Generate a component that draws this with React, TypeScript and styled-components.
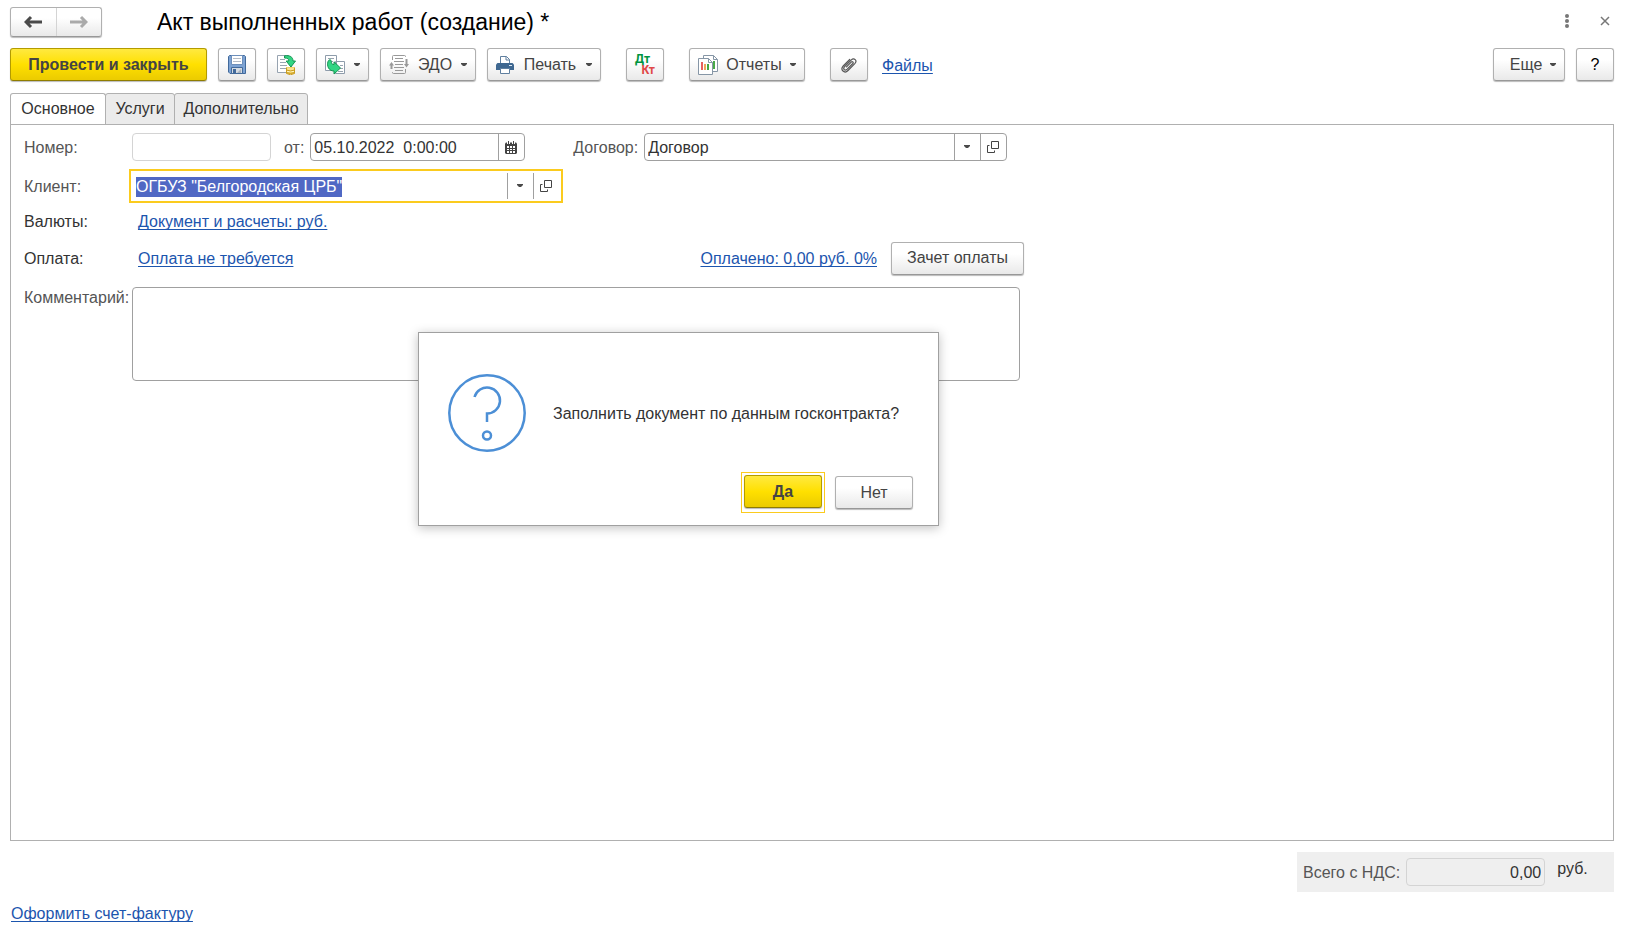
import React, { useEffect, useRef } from 'react';
import styled, { createGlobalStyle, css } from 'styled-components';

const GlobalStyle = createGlobalStyle`
  *, *::before, *::after { box-sizing: border-box; }
  body {
    margin: 0;
    background: #fff;
    color: #333;
    font: 16px/20px "Liberation Sans", Arial, sans-serif;
  }
  button, input, textarea { font: inherit; color: inherit; margin: 0; }
`;

const Page = styled.div`
  position: relative;
  display: flex;
  flex-direction: column;
  min-height: 100vh;
  padding: 7px 15px 5px 10px;
`;

const Header = styled.header`
  display: flex;
  align-items: center;
  height: 30px;
`;

const raised = css`
  border: 1px solid #b0b0b0;
  border-bottom-color: #989898;
  border-radius: 3px;
  background: linear-gradient(#fff 0%, #fff 35%, #e9e9e9 100%);
  box-shadow: 0 1px 1px #bbb;
`;

const History = styled.nav`
  ${raised}
  display: flex;
  width: 92px;
  height: 30px;
`;

const HistoryButton = styled.button`
  display: flex;
  flex: 1;
  align-items: center;
  justify-content: center;
  padding: 0;
  border: 0;
  background: none;
  & + & { border-left: 1px solid #d4d4d4; }
`;

const Title = styled.h1`
  flex: 1;
  margin: 0 0 0 55px;
  color: #000;
  font-size: 23px;
  font-weight: 400;
  line-height: 28px;
`;

const WindowControls = styled.div`
  display: flex;
  gap: 20px;
  padding-bottom: 2px;
`;

const WindowButton = styled.button`
  display: flex;
  align-items: center;
  justify-content: center;
  width: 18px;
  height: 20px;
  padding: 0;
  border: 0;
  background: none;
`;

const Toolbar = styled.div`
  display: flex;
  align-items: center;
  gap: 11px;
  margin-top: 11px;
`;

const Group = styled.div`
  display: flex;
  align-items: center;
  gap: 14px;
  margin-left: 14px;
`;

const Spacer = styled.div`
  flex: 1;
`;

const Button = styled.button<{ $primary?: boolean; $width: number }>`
  ${raised}
  display: flex;
  align-items: center;
  justify-content: center;
  flex: none;
  width: ${(p) => p.$width}px;
  height: 33px;
  padding: 0;
  color: #444;
  ${(p) =>
    p.$primary &&
    css`
      border-color: #b39b00;
      border-bottom-color: #8f7c00;
      background: linear-gradient(#ffe940 0%, #ffe000 50%, #ebcb00 100%);
      font-weight: 700;
    `}
`;

const MenuButton = styled(Button)`
  justify-content: space-between;
  padding: 0 8px;
`;

const HelpButton = styled(Button)`
  color: #000;
`;

const Link = styled.a`
  padding-top: 2px;
  color: #1c55ae;
  text-decoration: underline;
  text-decoration-thickness: 1px;
  text-decoration-skip-ink: none;
  text-underline-offset: 2px;
`;

const Ledger = styled.span<{ $credit?: boolean }>`
  align-self: ${(p) => (p.$credit ? 'flex-end' : 'flex-start')};
  color: ${(p) => (p.$credit ? '#e04848' : '#00953f')};
`;

const LedgerMark = styled.span`
  display: flex;
  flex-direction: column;
  width: 20px;
  font: 700 12px/11px Roboto, sans-serif;
`;

const Tabs = styled.div`
  display: flex;
  margin-top: 12px;
`;

const Tab = styled.button<{ $active?: boolean; $width: number }>`
  width: ${(p) => p.$width}px;
  height: 32px;
  margin-bottom: -1px;
  margin-left: -1px;
  padding: 0;
  border: 1px solid #b0b0b0;
  border-radius: 3px 3px 0 0;
  border-bottom-color: ${(p) => (p.$active ? '#fff' : '#b0b0b0')};
  background: ${(p) => (p.$active ? '#fff' : '#ebebeb')};
  &:first-child { margin-left: 0; }
`;

const Panel = styled.form`
  display: flex;
  flex: 1;
  flex-direction: column;
  gap: 8px;
  padding: 8px 13px;
  border: 1px solid #b0b0b0;
`;

const Row = styled.div<{ $height?: number }>`
  display: flex;
  align-items: center;
  height: ${(p) => (p.$height ? `${p.$height}px` : 'auto')};
  max-width: 1000px;
`;

const CommentRow = styled(Row)`
  align-items: flex-start;
  padding-top: 2px;
`;

const Label = styled.label<{ $dark?: boolean }>`
  flex: none;
  width: 108px;
  padding-top: 1px;
  color: ${(p) => (p.$dark ? '#333' : '#555')};
`;

const InlineLabel = styled.label`
  flex: none;
  padding-top: 2px;
  color: #555;
`;

const Field = styled.div<{ $width: number; $readOnly?: boolean; $focused?: boolean }>`
  display: flex;
  flex: none;
  width: ${(p) => p.$width}px;
  height: 28px;
  overflow: hidden;
  border: 1px solid ${(p) => (p.$focused ? 'transparent' : p.$readOnly ? '#d4d4d4' : '#a0a0a0')};
  border-radius: ${(p) => (p.$focused ? 0 : 4)}px;
  ${(p) =>
    p.$focused &&
    css`
      outline: 2px solid #fbcb1e;
      outline-offset: 1px;
    `}
`;

const TextInput = styled.input<{ $right?: boolean }>`
  flex: 1;
  min-width: 0;
  padding: 2px 3px 0;
  border: 0;
  outline: 0;
  background: none;
  text-align: ${(p) => (p.$right ? 'right' : 'left')};
  white-space: pre;
  &::selection { background: #5068c4; color: #fff; }
`;

const FieldButton = styled.button`
  display: flex;
  align-items: center;
  justify-content: center;
  width: 26px;
  padding: 0 2px 0 0;
  border: 0;
  border-left: 1px solid #a0a0a0;
  background: none;
`;

const InlineField = styled.div<{ $before: number }>`
  display: flex;
  align-items: center;
  gap: 6px;
  margin-left: ${(p) => p.$before}px;
`;

const Indented = styled.div`
  flex: 1;
  padding: 1px 0 0 6px;
`;

const Payment = styled.div`
  display: flex;
  align-items: center;
  gap: 14px;
`;

const Comment = styled.textarea`
  flex: none;
  width: 888px;
  height: 94px;
  padding: 3px;
  border: 1px solid #a0a0a0;
  border-radius: 4px;
  outline: 0;
  resize: none;
`;

const Footer = styled.footer`
  display: flex;
  flex-direction: column;
  gap: 10px;
  padding-top: 11px;
`;

const Total = styled.div`
  display: flex;
  align-items: center;
  align-self: flex-end;
  gap: 6px;
  width: 317px;
  height: 40px;
  padding-left: 6px;
  background: #efefef;
`;

const Currency = styled.span`
  padding: 0 0 6px 6px;
`;

const FooterLink = styled(Link)`
  align-self: flex-start;
  margin-left: 1px;
`;

const Dialog = styled.section`
  position: absolute;
  top: 332px;
  left: 418px;
  display: flex;
  flex-direction: column;
  justify-content: space-between;
  width: 521px;
  height: 194px;
  padding: 41px 25px 12px 29px;
  border: 1px solid #a0a0a0;
  background: #fff;
  box-shadow: 0 2px 10px rgba(0, 0, 0, 0.25);
`;

const Message = styled.div`
  display: flex;
  align-items: center;
  gap: 27px;
`;

const MessageText = styled.span`
  padding-top: 2px;
`;

const Answers = styled.div`
  display: flex;
  align-items: center;
  justify-content: flex-end;
  gap: 10px;
`;

const DefaultFrame = styled.div`
  padding: 2px 2px 4px;
  border: 1px solid #fbcb1e;
`;

const Caret = () => (
  <svg width="6" height="4" viewBox="0 0 6 4" aria-hidden="true">
    <path d="M0 0h6v1L4 3H2L0 1z" fill="#4a4a4a" />
  </svg>
);

const Arrow = ({ color, flip }: { color: string; flip?: boolean }) => (
  <svg width="18" height="14" viewBox="0 0 18 14" aria-hidden="true">
    <g transform={flip ? 'matrix(-1 0 0 1 18 0)' : undefined}>
      <path d="M7 2 2 7 7 12M2 7h16" fill="none" stroke={color} strokeWidth="3" />
    </g>
  </svg>
);

const OpenIcon = () => (
  <svg width="12" height="12" viewBox="0 0 12 12" fill="none" stroke="#444" aria-hidden="true">
    <path d="M4.500.5h7v7h-7zM2.500 4.500h-2v7h7v-2" />
  </svg>
);

const CalendarIcon = () => (
  <svg width="12" height="13" viewBox="0 0 12 13" aria-hidden="true">
    <path d="M0 2.500 1 1.500h10l1 1V12l-1 1H1l-1-1z" fill="#444" />
    <path d="M3.500 0v3M8.500 0v3" stroke="#fff" strokeWidth="3" />
    <path d="M3.500 0v3M8.500 0v3" stroke="#444" />
    <path d="M2 5h2v2H2zM5 5h2v2H5zM8 5h2v2H8zM2 8h2v1H2zM5 8h2v1H5zM8 8h2v1H8zM2 10h2v2H2zM5 10h2v2H5zM8 10h2v2H8z" fill="#fff" />
  </svg>
);

const SaveIcon = () => (
  <svg width="18" height="19" viewBox="0 0 18 19" aria-hidden="true">
    <path d="M.5 1.500 1.500.5h15l1 1v17H2L.5 17z" fill="#7da3d4" stroke="#426a9b" />
    <path d="M3.500.5h11v9h-11z" fill="#fff" stroke="#6d8fbb" />
    <path d="M5 3.500h8M5 6.500h8" stroke="#b5bcc6" />
    <path d="M3.500 12.500h11v6h-11z" fill="#d6dce3" stroke="#426a9b" />
    <path d="M5 14h3v4H5z" fill="#426a9b" />
    <path d="M9 18l4-4v4z" fill="#a9b3be" />
  </svg>
);

const PostIcon = () => (
  <svg width="19" height="20" viewBox="0 0 19 20" aria-hidden="true">
    <path d="M.5.5h11l3 3v14H.5z" fill="#fff" stroke="#97a3b0" />
    <path d="M3 4.500h5M3 7.500h6M3 10.500h7M3 13.500h6" stroke="#9aa6b2" />
    <path d="M9.500 12h8v7h-8z" fill="#f3d46a" />
    <path d="M9.500 14h8M9.500 16.500h8" stroke="#fff3b8" />
    <path d="M9.500 12.500v6q4 2.500 8 0v-6M9.500 15q4 2 8 0M9.500 17.500q4 2 8 0" fill="none" stroke="#c99c22" />
    <path d="M7.500.8C13 0 16 2 16 6h2.500l-4.600 6-4.700-6h2.600c.2-2-1-3-4.300-3z" fill="#32d583" stroke="#159452" />
  </svg>
);

const CreateFromIcon = () => (
  <svg width="20" height="20" viewBox="0 0 20 20" aria-hidden="true">
    <path d="M.5.5h11v15H.5zM10.500 6.500h9v12h-9z" fill="#fff" stroke="#8e9cab" />
    <path d="M3 3.500h6M3 6.500h5M15 10.500h3M15 13.500h3M13 16.500h5" stroke="#97a3af" />
    <path d="M3 6.500C4 4 6.300 4.500 6.300 6.500c0 2 .7 3 2.700 3V6.800l6.500 6.200-6.500 6v-3C3.800 16 1.500 11 3 6.500z" fill="#32d583" stroke="#159452" />
  </svg>
);

const ExchangeIcon = () => (
  <svg width="20" height="19" viewBox="0 0 20 19" fill="none" stroke="#999" aria-hidden="true">
    <path d="M3.500 5V1.500q0-1 1-1h11q1 0 1 1V2M16.500 14v3.500q0 1-1 1h-11q-1 0-1-1V17" />
    <path d="M6 3.500h8M5 6.500h10M6 9.500h8M5 12.500h10M6 15.500h8" />
    <path d="M2.500 14V9M17.500 4v6" strokeWidth="2" />
    <path d="M0 10.500h5L2.500 7zM15 9h5l-2.500 3.500z" fill="#999" stroke="none" />
  </svg>
);

const PrintIcon = () => (
  <svg width="18" height="18" viewBox="0 0 18 18" aria-hidden="true">
    <path d="M4.500 7V.5h6l3 3V7" fill="#fff" stroke="#5f7f9f" />
    <path d="M10 .5V4h3.500" fill="none" stroke="#5f7f9f" />
    <path d="M1.500 7h15L18 8.500V14H0V8.500z" fill="#3e6790" />
    <path d="M13 9.500h3" stroke="#dce7f2" />
    <path d="M4.500 12.500h9v5h-9z" fill="#fff" stroke="#5f7f9f" />
  </svg>
);

const ReportIcon = () => (
  <svg width="20" height="20" viewBox="0 0 20 20" aria-hidden="true">
    <path d="M5.500.5h10l4 4v12h-14z" fill="#fff" stroke="#8696a6" />
    <path d="M15.500.5v4h4" fill="none" stroke="#8696a6" />
    <path d="M16 6v8" stroke="#48a948" strokeWidth="2" />
    <path d="M.5 3.500h10l4 4v12H.5z" fill="#fff" stroke="#8696a6" />
    <path d="M10.500 3.500v4h4" fill="none" stroke="#8696a6" />
    <path d="M3 7h2v8H3z" fill="#e86060" />
    <path d="M6 9h2v6H6z" fill="#efa45c" />
    <path d="M9 9h2v6H9z" fill="#43a843" />
  </svg>
);

const ClipIcon = () => (
  <svg width="16" height="16" viewBox="0 0 16 16" fill="none" stroke="#555" strokeWidth="1.200" strokeLinecap="round" aria-hidden="true">
    <path d="M5.500 9.800l4.700-4.700c1.200-1.200 2.700.2 1.600 1.400l-5.600 5.600c-2.300 2.200-4.700-.1-2.600-2.400l6.500-6.600c3-3 6.600.4 3.700 3.500L7 13.500c-3.500 3.600-8.200-.6-4.800-4.500L8.700 2.500" />
  </svg>
);

const QuestionIcon = () => (
  <svg width="78" height="78" viewBox="0 0 78 78" fill="none" stroke="#4c8fd6" strokeWidth="2.500" aria-hidden="true">
    <circle cx="39" cy="39" r="37.700" />
    <path d="M26.500 23A13 13 0 1 1 39 39.500V48" />
    <circle cx="39" cy="61.500" r="4" />
  </svg>
);

export default function App() {
  const client = useRef<HTMLInputElement>(null);

  useEffect(() => {
    client.current?.focus();
    client.current?.select();
  }, []);

  return (
    <>
      <GlobalStyle />
      <Page>
        <Header>
          <History aria-label="История">
            <HistoryButton aria-label="Назад"><Arrow color="#4a4a4a" /></HistoryButton>
            <HistoryButton aria-label="Вперед"><Arrow color="#aaa" flip /></HistoryButton>
          </History>
          <Title>Акт выполненных работ (создание) *</Title>
          <WindowControls>
            <WindowButton aria-label="Меню окна">
              <svg width="4" height="14" viewBox="0 0 4 14" fill="#777">
                <circle cx="2" cy="2" r="2" /><circle cx="2" cy="7" r="2" /><circle cx="2" cy="12" r="2" />
              </svg>
            </WindowButton>
            <WindowButton aria-label="Закрыть">
              <svg width="10" height="10" viewBox="0 0 10 10" stroke="#777" strokeWidth="1.500">
                <path d="M1 1l8 8M9 1 1 9" />
              </svg>
            </WindowButton>
          </WindowControls>
        </Header>

        <Toolbar>
          <Button $primary $width={197}>Провести и закрыть</Button>
          <Button $width={38} aria-label="Записать"><SaveIcon /></Button>
          <Button $width={38} aria-label="Провести"><PostIcon /></Button>
          <MenuButton $width={53} aria-label="Создать на основании"><CreateFromIcon /><Caret /></MenuButton>
          <MenuButton $width={96}><ExchangeIcon />ЭДО<Caret /></MenuButton>
          <MenuButton $width={114}><PrintIcon />Печать<Caret /></MenuButton>
          <Group>
            <Button $width={38}>
              <LedgerMark><Ledger>Дт</Ledger><Ledger $credit>Кт</Ledger></LedgerMark>
            </Button>
          </Group>
          <Group>
            <MenuButton $width={116}><ReportIcon />Отчеты<Caret /></MenuButton>
          </Group>
          <Group>
            <Button $width={38} aria-label="Присоединенные файлы"><ClipIcon /></Button>
            <Link href="#files">Файлы</Link>
          </Group>
          <Spacer />
          <MenuButton $width={72}><span />Еще<Caret /></MenuButton>
          <HelpButton $width={38}>?</HelpButton>
        </Toolbar>

        <Tabs role="tablist">
          <Tab role="tab" aria-selected $active $width={96}>Основное</Tab>
          <Tab role="tab" $width={70}>Услуги</Tab>
          <Tab role="tab" $width={134}>Дополнительно</Tab>
        </Tabs>

        <Panel>
          <Row>
            <Label htmlFor="number">Номер:</Label>
            <Field $width={139} $readOnly><TextInput id="number" readOnly /></Field>
            <InlineField $before={13}>
              <InlineLabel htmlFor="date">от:</InlineLabel>
              <Field $width={215}>
                <TextInput id="date" defaultValue="05.10.2022  0:00:00" />
                <FieldButton type="button" aria-label="Календарь"><CalendarIcon /></FieldButton>
              </Field>
            </InlineField>
            <InlineField $before={48}>
              <InlineLabel htmlFor="contract">Договор:</InlineLabel>
              <Field $width={363}>
                <TextInput id="contract" defaultValue="Договор" />
                <FieldButton type="button" aria-label="Выбрать"><Caret /></FieldButton>
                <FieldButton type="button" aria-label="Открыть"><OpenIcon /></FieldButton>
              </Field>
            </InlineField>
          </Row>
          <Row $height={34}>
            <Label htmlFor="client">Клиент:</Label>
            <Field $width={428} $focused>
              <TextInput id="client" ref={client} defaultValue={'ОГБУЗ "Белгородская ЦРБ"'} />
              <FieldButton type="button" aria-label="Выбрать"><Caret /></FieldButton>
              <FieldButton type="button" aria-label="Открыть"><OpenIcon /></FieldButton>
            </Field>
          </Row>
          <Row $height={20}>
            <Label as="span" $dark>Валюты:</Label>
            <Indented><Link href="#currency">Документ и расчеты: руб.</Link></Indented>
          </Row>
          <Row $height={38}>
            <Label as="span" $dark>Оплата:</Label>
            <Indented><Link href="#payment">Оплата не требуется</Link></Indented>
            <Payment>
              <Link href="#paid">Оплачено: 0,00 руб. 0%</Link>
              <Button type="button" $width={133}>Зачет оплаты</Button>
            </Payment>
          </Row>
          <CommentRow>
            <Label htmlFor="comment">Комментарий:</Label>
            <Comment id="comment" />
          </CommentRow>
        </Panel>

        <Footer>
          <Total>
            <InlineLabel htmlFor="total">Всего с НДС:</InlineLabel>
            <Field $width={139} $readOnly>
              <TextInput id="total" $right readOnly defaultValue="0,00" />
            </Field>
            <Currency>руб.</Currency>
          </Total>
          <FooterLink href="#invoice">Оформить счет-фактуру</FooterLink>
        </Footer>

        <Dialog role="dialog" aria-labelledby="question">
          <Message>
            <QuestionIcon />
            <MessageText id="question">Заполнить документ по данным госконтракта?</MessageText>
          </Message>
          <Answers>
            <DefaultFrame>
              <Button $primary $width={78}>Да</Button>
            </DefaultFrame>
            <Button $width={78}>Нет</Button>
          </Answers>
        </Dialog>
      </Page>
    </>
  );
}
